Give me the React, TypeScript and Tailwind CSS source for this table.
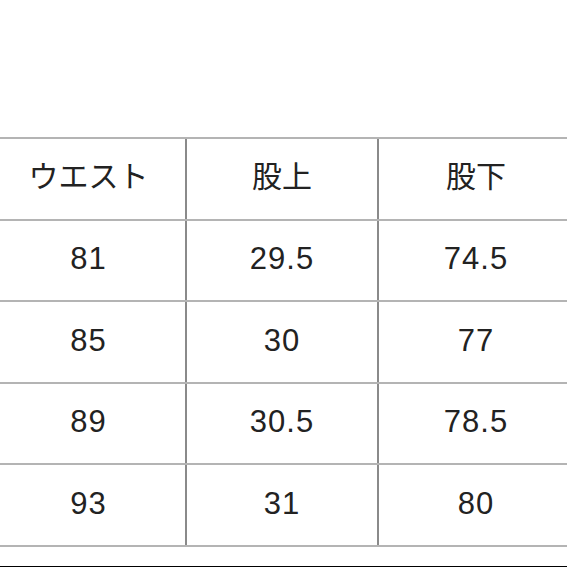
import React from "react";

const rows: string[][] = [
  ["ウエスト", "股上", "股下"],
  ["81", "29.5", "74.5"],
  ["85", "30", "77"],
  ["89", "30.5", "78.5"],
  ["93", "31", "80"],
];

export default function App() {
  return (
    <div
      className="w-[567px] h-[567px] overflow-hidden bg-white flex flex-col text-[#222222]"
      style={{ fontFamily: '"Liberation Sans", "Noto Sans CJK JP", sans-serif' }}
    >
      <div className="h-[137px] shrink-0" />
      <div className="ml-[-8px] w-[585px] border-b-2 border-[#b4b4b4] shrink-0">
        {rows.map((r, i) => {
          const t =
            i === 0
              ? "text-[30px] pb-[4px]"
              : "text-[31px] tracking-[1px] pb-[3px]";
          return (
            <div key={i} className="flex h-[81.5px] border-t-2 border-[#b4b4b4]">
              <div className={`w-[195px] border-r-2 border-[#8a8a8a] flex items-center justify-center leading-none ${t}`}>
                {r[0]}
              </div>
              <div className={`w-[192px] border-r-2 border-[#8a8a8a] flex items-center justify-center leading-none ${t}`}>
                {r[1]}
              </div>
              <div className={`w-[194px] flex items-center justify-center leading-none ${t}`}>
                {r[2]}
              </div>
            </div>
          );
        })}
      </div>
      <div className="flex-1" />
      <div className="h-px bg-black shrink-0" />
    </div>
  );
}
